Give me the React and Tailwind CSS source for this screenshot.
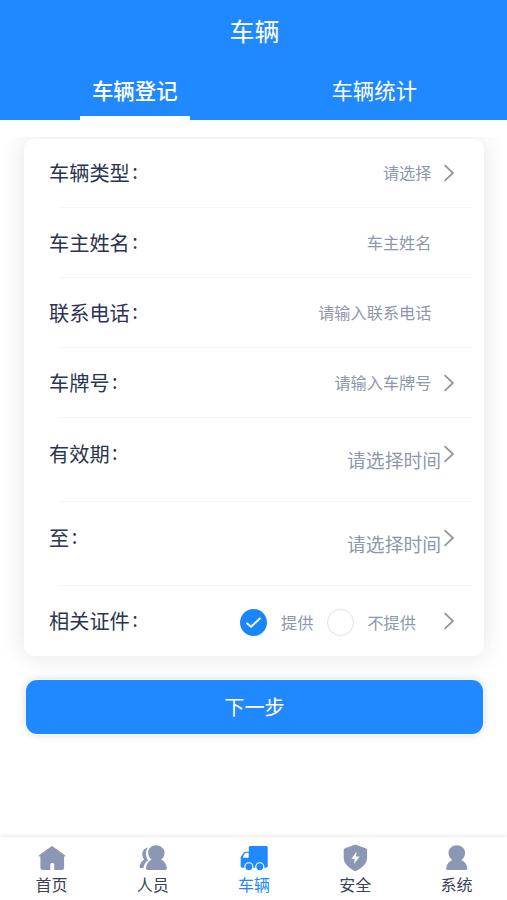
import React, { useState } from 'react';

const fields = [
    { label: '车辆类型', placeholder: '请选择', arrow: true },
    { label: '车主姓名', placeholder: '车主姓名' },
    { label: '联系电话', placeholder: '请输入联系电话' },
    { label: '车牌号', placeholder: '请输入车牌号', arrow: true },
    { label: '有效期', placeholder: '请选择时间', arrow: true, date: true },
    { label: '至', placeholder: '请选择时间', arrow: true, date: true },
];

function Arrow() {
    return (
        <svg width="12" height="18" viewBox="0 0 12 18" fill="none" className="shrink-0">
            <path d="M1.600 1.200 9.900 9l-8.300 7.800" stroke="#969696" strokeWidth="1.800" />
        </svg>
    );
}

function HomeIcon() {
    return (
        <svg width="28" height="28" viewBox="0 0 28 28" fill="#8c97b5">
            <path d="M13.200 2.400a1.200 1.200 0 0 1 1.600 0L27 11.300c.6.500.4 1.200-.3 1.200h-.6v11c0 1.600-.8 2.400-2.400 2.400h-7.500v-5.400c0-1-.7-1.600-1.900-1.600s-2 .6-2 1.600v5.400H4.800c-1.600 0-2.400-.8-2.400-2.400v-11h-1.100c-.7 0-.9-.7-.3-1.200z" />
        </svg>
    );
}

function PeopleIcon() {
    return (
        <svg width="28" height="28" viewBox="0 0 28 28" fill="#8c97b5">
            <path d="M17 1.200c-4.500 0-7.900 3.300-7.900 7.500 0 2.900 1.300 5.400 3.500 6.900-3.200 1.500-5.200 4.800-5.600 8.500-.1 1.200.4 1.800 1.600 1.800h17.600c1.200 0 1.800-.6 1.700-1.800-.4-3.700-2.500-7-5.700-8.500 2.200-1.500 3.400-4 3.400-6.900 0-4.200-3.900-7.500-8.600-7.500z" />
            <path d="M8.900 3.600C5.400 4.300 3.100 7 3.300 10.600c.1 1.900.8 3.600 2 5-2.600 1.500-4.400 4.400-4.700 7.200 0 .9.400 1.300 1.100 1.300h2.700c.5-3.300 2.100-6.100 4.700-7.900C6.600 12.800 6.200 7.800 8.900 3.600z" />
        </svg>
    );
}

function TruckIcon() {
    return (
        <svg width="28" height="28" viewBox="0 0 28 28">
            <path fill="#2189ff" d="M10.400 1.900h15.700c1 0 1.600.6 1.600 1.600v18.600c0 1-.6 1.600-1.600 1.600H2.300C1.300 23.700.7 23.100.7 22.100v-8.300c0-.7.2-1.200.6-1.800l2.300-3c.6-.8 1.400-1.300 2.400-1.300h2.800V3.500c0-1 .6-1.600 1.600-1.600z" />
            <path fill="#fff" d="M6.300 8.800h2.400v3.900c0 .7-.4 1.100-1.100 1.100H2.900c.2-2.100 1.600-4.100 3.400-5z" />
            <circle cx="8.900" cy="22.700" r="4" fill="#2189ff" stroke="#fff" strokeWidth="1.100" />
            <circle cx="19.800" cy="22.700" r="4" fill="#2189ff" stroke="#fff" strokeWidth="1.100" />
        </svg>
    );
}

function ShieldIcon() {
    return (
        <svg width="28" height="28" viewBox="0 0 28 28">
            <path fill="#8c97b5" d="M13.600.8a2 2 0 0 1 1.600 0l10 3.700c.6.200.9.600.9 1.200v8.400c0 5.300-5.200 10.400-10.900 12.800a2 2 0 0 1-1.600 0C7.900 24.500 2.700 19.400 2.700 14.100V5.700c0-.6.300-1 .9-1.200z" />
            <path fill="#fff" d="M15.600 7.600 10.300 14.900h3.500l-.8 5.200 5.600-7.500h-3.700z" />
        </svg>
    );
}

function UserIcon() {
    return (
        <svg width="28" height="28" viewBox="0 0 28 28" fill="#8c97b5">
            <path d="M14.800 1.200c-4.700 0-8.300 3.300-8.300 7.800 0 2.900 1.500 5.500 3.900 6.900-3.400 1.200-5.500 4.200-6.200 8-.2 1.300.3 2 1.600 2h18c1.300 0 1.800-.7 1.600-2-.7-3.800-2.800-6.800-6.200-8 2.400-1.400 3.900-4 3.900-6.900 0-4.500-3.600-7.800-8.300-7.800z" />
        </svg>
    );
}

function Radio({ checked }) {
    if (!checked) {
        return <span className="h-[27px] w-[27px] rounded-full border border-[#e0e0e3] bg-white"></span>;
    }
    return (
        <span className="flex h-[27px] w-[27px] items-center justify-center rounded-full bg-[#1a86fb]">
            <svg width="17" height="14" viewBox="0 0 17 14" fill="none">
                <path d="m1.500 8 4.500 3.700L15.500 3" stroke="#fff" strokeWidth="1.900" />
            </svg>
        </span>
    );
}

function Label({ text }) {
    return (
        <label className="flex text-[20.2px] leading-[30px] text-[#2b3450]">
            {text}<span className="-mt-[2px] ml-[2.5px]">:</span>
        </label>
    );
}

const navs = [
    { name: '首页', icon: <HomeIcon /> },
    { name: '人员', icon: <PeopleIcon /> },
    { name: '车辆', icon: <TruckIcon />, active: true },
    { name: '安全', icon: <ShieldIcon /> },
    { name: '系统', icon: <UserIcon /> },
];

export default function App() {
    const [tab, setTab] = useState(0);
    const [provided, setProvided] = useState(true);

    return (
        <div className="flex h-[900px] w-[507px] flex-col bg-white font-['Noto_Sans_CJK_SC',sans-serif]">
            {/* Header */}
            <header className="flex h-[120px] shrink-0 flex-col bg-[#2189ff] text-white">
                <h1 className="h-[62px] pl-[2px] text-center text-[25px] leading-[60px]">车辆</h1>
                <div className="flex flex-1 pr-[13px] pl-[15px]">
                    {['车辆登记', '车辆统计'].map((name, i) => (
                        <button
                            key={name}
                            onClick={() => setTab(i)}
                            className={`flex flex-1 flex-col items-center justify-between text-[21.4px] ${tab === i ? 'font-medium' : ''}`}
                        >
                            <span className="h-[54px] leading-[55px]">{name}</span>
                            {tab === i && <span className="h-1 w-[110px] bg-white"></span>}
                        </button>
                    ))}
                </div>
            </header>

            {/* Form */}
            <main className="mt-[17px] flex-1 overflow-hidden px-6 pt-[2px]">
                <div className="mr-[-1px] h-[517px] w-[460px] rounded-[11px] bg-white shadow-[0_0_24px_rgba(40,50,60,0.13)]">
                    {fields.map((f, i) => (
                        <div key={i} className={`flex flex-col ${f.date ? 'h-[84px]' : i === 0 ? 'h-[69px]' : 'h-[70px]'}`}>
                            <div className={`flex flex-1 justify-between pr-[29px] pl-[25px] ${f.date ? 'items-start pt-[21px]' : i === 0 ? 'items-center' : 'items-center pt-px'}`}>
                                <Label text={f.label} />
                                {f.date ? (
                                    <div className="flex items-start">
                                        <span className="mr-[2px] pt-[6px] text-[18.8px] leading-[30px] text-[#8f96ad]">{f.placeholder}</span>
                                        <span className="pt-[6px]"><Arrow /></span>
                                    </div>
                                ) : (
                                    <div className="flex items-center">
                                        <span className="mr-[11.5px] pb-[2px] text-[16.2px] leading-[24px] text-[#8f96ad]">{f.placeholder}</span>
                                        {f.arrow ? <Arrow /> : <span className="w-3"></span>}
                                    </div>
                                )}
                            </div>
                            <div className="mr-[11px] ml-[36px] h-px bg-[#f5f5f6]"></div>
                        </div>
                    ))}
                    <div className="flex h-[70px] items-center justify-between pr-[29px] pl-[25px]">
                        <Label text="相关证件" />
                        <div className="flex items-center">
                            <button className="flex items-center pt-[2px]" onClick={() => setProvided(true)}>
                                <Radio checked={provided} />
                                <span className="mr-[14px] ml-[14px] text-[16.2px] leading-[24px] text-[#8f96ad]">提供</span>
                            </button>
                            <button className="flex items-center pt-[2px]" onClick={() => setProvided(false)}>
                                <Radio checked={!provided} />
                                <span className="mr-[27px] ml-[13px] text-[16.2px] leading-[24px] text-[#8f96ad]">不提供</span>
                            </button>
                            <Arrow />
                        </div>
                    </div>
                </div>

                <button className="mt-[24px] ml-[2px] h-[54px] w-[457px] rounded-[11px] bg-[#2189ff] text-[20.2px] text-white shadow-[0_0_0_1px_#f3faff,0_0_8px_rgba(40,50,60,0.2)]">
                    下一步
                </button>
            </main>

            {/* Bottom nav */}
            <nav className="flex h-[63px] shrink-0 bg-white pl-px shadow-[0_-1px_4px_rgba(0,0,0,0.1)]">
                {navs.map((n) => (
                    <a key={n.name} className={`flex flex-1 flex-col items-center pt-[7px] text-[16px] leading-[25px] ${n.active ? 'text-[#2189ff]' : 'text-[#3a415a]'}`}>
                        {n.icon}
                        <span>{n.name}</span>
                    </a>
                ))}
            </nav>
        </div>
    );
}
